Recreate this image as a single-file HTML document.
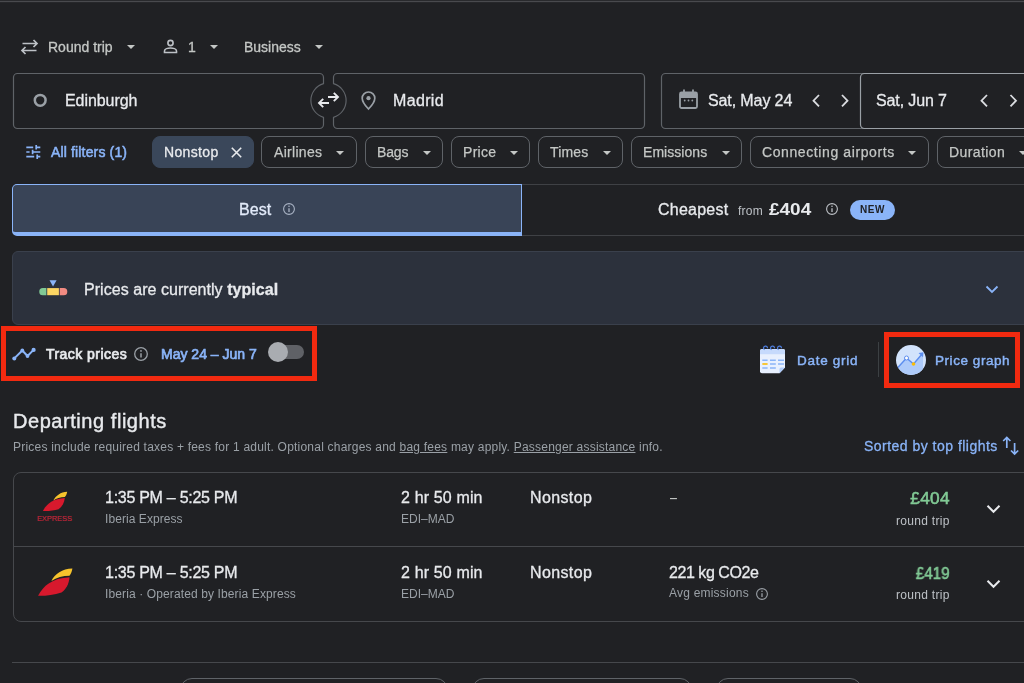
<!DOCTYPE html>
<html lang="en">
<head>
<meta charset="utf-8">
<title>Flights</title>
<style>
*{box-sizing:border-box;margin:0;padding:0}
html,body{width:1024px;height:683px;overflow:hidden;background:#202124}
body{position:relative;font-family:"Liberation Sans",Arial,sans-serif;color:#e8eaed;-webkit-font-smoothing:antialiased}
.abs{position:absolute}
.t{position:absolute;white-space:nowrap;line-height:1;transform-origin:0 50%;will-change:transform}
.topline{left:0;top:0;width:1024px;height:3px;background:linear-gradient(#292a2d 0,#292a2d 33.300%,#494a4e 33.300%,#494a4e 66.600%,#26272a 66.600%)}
.box{position:absolute;border:1px solid #5f6368;border-radius:4px}
.pill{position:absolute;top:136.400px;height:31.600px;border:1px solid #5f6368;border-radius:8px}
.pt{font-size:14px;color:#c4c7c5;-webkit-text-stroke:0.25px}
.m{-webkit-text-stroke:0.3px}
.caret{position:absolute;width:0;height:0;border-left:4px solid transparent;border-right:4px solid transparent;border-top:4.5px solid #c4c7c5}
.g{color:#9aa0a6}
.blue{color:#8ab4f8}
svg{position:absolute;overflow:visible}
</style>
</head>
<body>
<div class="abs topline"></div>

<!-- row 1: trip options -->
<svg style="left:20px;top:39px" width="19" height="16" viewBox="0 0 19 16"><path d="M13.5 1 L17 4.5 L13.5 8 M17 4.5 H2.5 M5.5 8 L2 11.5 L5.5 15 M2 11.5 H16.5" fill="none" stroke="#bdc1c6" stroke-width="1.7"/></svg>
<div class="t g m" id="roundtrip" style="left:48px;top:40px;font-size:14px;color:#c4c7c5">Round trip</div>
<div class="caret" style="left:127px;top:45px"></div>
<svg style="left:163px;top:39px" width="15" height="15" viewBox="0 0 15 15"><circle cx="7.5" cy="4" r="2.6" fill="none" stroke="#bdc1c6" stroke-width="1.6"/><path d="M1.5 13.5 V12 C1.500 10 5 9 7.5 9 C10 9 13.5 10 13.5 12 V13.500 Z" fill="none" stroke="#bdc1c6" stroke-width="1.6"/></svg>
<div class="t m" id="one" style="left:188px;top:40px;font-size:14px;color:#c4c7c5">1</div>
<div class="caret" style="left:210px;top:45px"></div>
<div class="t m" id="business" style="left:244px;top:40px;font-size:14px;color:#c4c7c5">Business</div>
<div class="caret" style="left:315px;top:45px"></div>

<!-- row 2: search boxes -->
<svg style="left:0;top:0" width="1024" height="140" viewBox="0 0 1024 140" fill="none" stroke="#5f6368" stroke-width="1.2" stroke-linejoin="round">
<path d="M17.500 73.500 H319.500 A4 4 0 0 1 323.500 77.500 V83.700 A17.500 17.500 0 0 0 323.500 117.300 V124.500 A4 4 0 0 1 319.500 128.500 H17.500 A4 4 0 0 1 13.500 124.500 V77.500 A4 4 0 0 1 17.500 73.500 Z"/>
<path d="M337.500 73.500 H640.500 A4 4 0 0 1 644.500 77.500 V124.500 A4 4 0 0 1 640.500 128.500 H337.500 A4 4 0 0 1 333.500 124.500 V117.300 A17.500 17.500 0 0 0 333.500 83.700 V77.500 A4 4 0 0 1 337.500 73.500 Z"/>
<path d="M1030 73.500 H665.500 A4 4 0 0 0 661.500 77.500 V124.500 A4 4 0 0 0 665.500 128.500 H1030"/>
<path d="M1030 73.500 H864.500 A4 4 0 0 0 860.500 77.500 V124.500 A4 4 0 0 0 864.500 128.500 H1030" stroke="#9aa0a6"/>
</svg>
<svg style="left:33px;top:93px" width="14" height="14" viewBox="0 0 14 14"><circle cx="7.200" cy="7.300" r="5.400" fill="none" stroke="#9aa0a6" stroke-width="2.500"/></svg>
<div class="t m" id="edi" style="left:65px;top:93px;font-size:16px;letter-spacing:-0.069px">Edinburgh</div>
<svg style="left:318px;top:91px" width="21" height="18" viewBox="0 0 21 18"><path d="M10 6 H20 M15.800 1.800 L20 6 L15.800 10.200 M11 12 H1 M5.200 7.800 L1 12 L5.200 16.200" fill="none" stroke="#e8eaed" stroke-width="1.900"/></svg>
<svg style="left:361px;top:91px" width="15" height="19" viewBox="0 0 15 19"><path d="M7.500 1 C3.900 1 1.200 3.700 1.200 7.200 C1.200 11.500 7.500 18 7.500 18 C7.500 18 13.800 11.500 13.800 7.200 C13.800 3.700 11.100 1 7.500 1 Z" fill="none" stroke="#9aa0a6" stroke-width="1.700"/><circle cx="7.500" cy="7.200" r="2.100" fill="#9aa0a6"/></svg>
<div class="t m" id="mad" style="left:393px;top:93px;font-size:16px;letter-spacing:0.339px">Madrid</div>
<div class="t m" id="d1" style="left:708px;top:93px;font-size:16px;letter-spacing:-0.108px">Sat, May 24</div>
<div class="t m" id="d2" style="left:876px;top:93px;font-size:16px;letter-spacing:-0.116px">Sat, Jun 7</div>

<!-- date icons -->
<svg style="left:679px;top:89px" width="19" height="20" viewBox="0 0 19 20"><path d="M2.500 3.500 H16.500 A1.500 1.500 0 0 1 18 5 V17.500 A1.500 1.500 0 0 1 16.500 19 H2.500 A1.500 1.500 0 0 1 1 17.500 V5 A1.500 1.500 0 0 1 2.500 3.500 Z M1 8 H18" fill="none" stroke="#9aa0a6" stroke-width="1.800"/><rect x="1" y="3.500" width="17" height="4.500" fill="#9aa0a6"/><path d="M5 0.500 V4 M14 0.500 V4" stroke="#9aa0a6" stroke-width="1.800"/><circle cx="5.700" cy="11.500" r="0.900" fill="#9aa0a6"/><circle cx="9.500" cy="11.500" r="0.900" fill="#9aa0a6"/><circle cx="13.300" cy="11.500" r="0.900" fill="#9aa0a6"/></svg>
<svg style="left:0;top:0" width="1024" height="140" viewBox="0 0 1024 140" fill="none" stroke="#dadce0" stroke-width="1.800">
<path d="M819 95 L813.500 100.700 L819 106.400"/><path d="M842 95 L847.500 100.700 L842 106.400"/>
<path d="M987 95 L981.500 100.700 L987 106.400"/><path d="M1010.500 95 L1016 100.700 L1010.500 106.400"/>
</svg>

<!-- row 3: filters -->
<svg style="left:26px;top:145px" width="15" height="14" viewBox="0 0 15 14" fill="none" stroke="#8ab4f8" stroke-width="1.700"><path d="M0.300 2.300 H7.200 M10.200 2.300 H14.300 M0.300 7 H3.600 M6.600 7 H14.300 M0.300 11.700 H8.200 M11.200 11.700 H14.300 M10.200 0 V4.600 M6.600 4.700 V9.300 M11.200 9.400 V14"/></svg>
<div class="t blue" id="allf" style="left:51px;top:145px;font-size:14px;letter-spacing:0.15px;-webkit-text-stroke:0.55px #8ab4f8">All filters (1)</div>
<div class="pill" style="left:151.600px;width:102px;background:#3a475a;border-color:#3a475a"></div>
<div class="t m" id="nonstop" style="letter-spacing:0.34px;left:164px;top:145px;font-size:14px">Nonstop</div>
<svg style="left:231px;top:147px" width="11" height="11" viewBox="0 0 11 11"><path d="M0.800 0.800 L10.200 10.200 M10.200 0.800 L0.800 10.200" stroke="#e8eaed" stroke-width="1.600"/></svg>

<div class="pill" style="left:261px;width:96px"></div>
<div class="t pt" id="f1" style="letter-spacing:0.3px;left:273.500px;top:145px">Airlines</div><div class="caret" style="left:335.500px;top:151px"></div>
<div class="pill" style="left:365px;width:78px"></div>
<div class="t pt" id="f2" style="letter-spacing:-0.15px;left:377px;top:145px">Bags</div><div class="caret" style="left:422.500px;top:151px"></div>
<div class="pill" style="left:451px;width:79px"></div>
<div class="t pt" id="f3" style="letter-spacing:0.3px;left:462.500px;top:145px">Price</div><div class="caret" style="left:509.500px;top:151px"></div>
<div class="pill" style="left:538px;width:85px"></div>
<div class="t pt" id="f4" style="letter-spacing:0.14px;left:550px;top:145px">Times</div><div class="caret" style="left:602.500px;top:151px"></div>
<div class="pill" style="left:631px;width:111px"></div>
<div class="t pt" id="f5" style="letter-spacing:0.05px;left:643px;top:145px">Emissions</div><div class="caret" style="left:721.500px;top:151px"></div>
<div class="pill" style="left:750px;width:179px"></div>
<div class="t pt" id="f6" style="letter-spacing:0.6px;left:762px;top:145px">Connecting airports</div><div class="caret" style="left:908px;top:151px"></div>
<div class="pill" style="left:937px;width:120px"></div>
<div class="t pt" id="f7" style="letter-spacing:0.42px;left:949px;top:145px">Duration</div><div class="caret" style="left:1019px;top:151px"></div>

<!-- tabs -->
<div class="abs" style="left:522px;top:184px;width:520px;height:52px;border-top:1px solid #3f4145;border-bottom:1px solid #3f4145"></div>
<div class="abs" style="left:12px;top:184px;width:510px;height:52px;background:#394457;border:1px solid #8ab4f8;border-bottom-width:4px;border-radius:5px 0 0 5px"></div>
<div class="t m" id="best" style="left:239px;top:202px;color:#e3ebfa;font-size:16px;letter-spacing:0.095px">Best</div>
<svg style="left:282px;top:202px" width="14" height="14" viewBox="0 0 14 14"><circle cx="7" cy="7" r="5.400" fill="none" stroke="#a9b3c4" stroke-width="1.100"/><path d="M7 6.300 V10" stroke="#a9b3c4" stroke-width="1.300"/><circle cx="7" cy="4.300" r="0.800" fill="#a9b3c4"/></svg>
<div class="t m" id="cheap" style="left:657.500px;top:202px;font-size:16px;letter-spacing:0.229px">Cheapest</div>
<div class="t" id="from" style="letter-spacing:0.25px;left:738px;top:205px;font-size:12px;color:#bdc1c6">from</div>
<div class="t" id="p404" style="transform:scaleX(1.185);left:769px;top:202px;font-size:16px;font-weight:bold">£404</div>
<svg style="left:825px;top:202px" width="14" height="14" viewBox="0 0 14 14"><circle cx="7" cy="7" r="5.400" fill="none" stroke="#bdc1c6" stroke-width="1.100"/><path d="M7 6.300 V10" stroke="#bdc1c6" stroke-width="1.300"/><circle cx="7" cy="4.300" r="0.800" fill="#bdc1c6"/></svg>
<div class="abs" style="left:850px;top:200px;width:45px;height:20px;border-radius:10px;background:#8ab4f8"></div>
<div class="t" id="new" style="left:859.500px;top:205px;font-size:10px;font-weight:bold;color:#202124;letter-spacing:0.5px">NEW</div>

<!-- price insight card -->
<div class="abs" style="left:12px;top:251px;width:1030px;height:74px;background:#2c313c;border:1px solid #3a404c;border-radius:6px"></div>
<svg style="left:39px;top:280px" width="29" height="16" viewBox="0 0 29 16"><path d="M10.500 0.300 H17.600 L14.050 6.600 Z" fill="#8ab4f8"/><path d="M3.800 8.100 H7.400 V15.200 H3.800 A3.550 3.550 0 0 1 3.800 8.100 Z" fill="#81c995"/><rect x="8.200" y="8.100" width="11.700" height="7.100" fill="#fdd663"/><path d="M20.700 8.100 H24.750 A3.550 3.550 0 0 1 24.750 15.200 H20.700 Z" fill="#f28b82"/></svg>
<div class="t m" id="prices" style="left:83.700px;top:282px;font-size:16px;letter-spacing:0.042px">Prices are currently <b>typical</b></div>
<svg style="left:985px;top:285px" width="14" height="9" viewBox="0 0 14 9"><path d="M1.500 1.500 L7 7 L12.500 1.500" fill="none" stroke="#8ab4f8" stroke-width="1.800"/></svg>

<!-- track prices row -->
<svg style="left:12px;top:346px" width="24" height="16" viewBox="0 0 24 16"><path d="M2.300 12.400 L10.300 4.500 L15.500 10 L21.600 3.900" fill="none" stroke="#8ab4f8" stroke-width="2" stroke-linejoin="round"/><circle cx="2.300" cy="12.400" r="2" fill="#8ab4f8"/><circle cx="10.300" cy="4.500" r="1.900" fill="#8ab4f8"/><circle cx="15.500" cy="10" r="1.900" fill="#8ab4f8"/><circle cx="21.600" cy="3.900" r="2.100" fill="#8ab4f8"/></svg>
<div class="t" id="track" style="left:45.700px;top:347px;-webkit-text-stroke:0.7px;font-size:14px;letter-spacing:0.453px">Track prices</div>
<svg style="left:132.500px;top:346px" width="16" height="16" viewBox="0 0 16 16"><circle cx="8" cy="8" r="6.300" fill="none" stroke="#9aa0a6" stroke-width="1.300"/><path d="M8 7.200 V11.400" stroke="#9aa0a6" stroke-width="1.500"/><circle cx="8" cy="4.900" r="0.900" fill="#9aa0a6"/></svg>
<div class="t blue" id="range" style="left:160.700px;top:347px;-webkit-text-stroke:0.7px;font-size:14px;letter-spacing:0.005px">May 24 – Jun 7</div>
<div class="abs" style="left:272px;top:345px;width:32.300px;height:14.200px;border-radius:7.100px;background:#5f6166"></div>
<div class="abs" style="left:267.700px;top:342.200px;width:20px;height:20px;border-radius:50%;background:#a9acb1"></div>
<div class="abs" id="red1" style="left:0.700px;top:325.500px;width:316.800px;height:55.500px;border:5.500px solid #f22a10"></div>

<!-- date grid / price graph -->
<svg style="left:759px;top:346px" width="28" height="28" viewBox="0 0 28 28">
<path d="M3 3 H24 A2 2 0 0 1 26 5 V21.500 L20.500 27.200 H3 A2 2 0 0 1 1 25.200 V5 A2 2 0 0 1 3 3 Z" fill="#e8f0fe"/>
<path d="M3 3 H24 A2 2 0 0 1 26 5 V8.300 H1 V5 A2 2 0 0 1 3 3 Z" fill="#c6dafc"/>
<path d="M20.500 27.200 V23 A1.500 1.500 0 0 1 22 21.500 H26 Z" fill="#aecbfa"/>
<g stroke="#4f7fe0" stroke-width="1.200" fill="none"><path d="M5.500 3.800 A2 2 0 1 1 8.500 2.300"/><path d="M12.500 3.800 A2 2 0 1 1 15.500 2.300"/><path d="M19.500 3.800 A2 2 0 1 1 22.500 2.300"/></g>
<g stroke="#8ab4f8" stroke-width="1.600"><path d="M3.300 14.200 H8.600 M11 14.200 H16.800 M19 14.200 H25"/><path d="M11 18 H16.800 M19 18 H25"/><path d="M3.300 22 H8.600 M11 22 H16.800"/></g>
<path d="M3.300 18 H8.600" stroke="#fbbc04" stroke-width="1.600"/>
</svg>
<div class="t blue" id="dgrid" style="left:797px;top:353.500px;-webkit-text-stroke:0.45px;font-size:13.5px;letter-spacing:0.715px">Date grid</div>
<div class="abs" style="left:878px;top:342px;width:1px;height:35px;background:#3c4043"></div>
<svg style="left:895.500px;top:345px" width="30" height="30" viewBox="0 0 30 30">
<defs><clipPath id="pgc"><circle cx="15" cy="15" r="15"/></clipPath></defs>
<circle cx="15" cy="15" r="15" fill="#d2e3fc"/>
<g clip-path="url(#pgc)"><path d="M0 24 L10.500 13 L17.500 19 L27 8 V30 H0 Z" fill="#aecbfa"/>
<path d="M1 23.500 L10.500 13 L17.500 19 L26.500 8.500" fill="none" stroke="#5b8def" stroke-width="1.400"/>
<path d="M22.500 8 L27.500 7.200 L27 12.300 Z" fill="#5b8def"/>
<circle cx="10.500" cy="13" r="2" fill="#fff" stroke="#5b8def" stroke-width="1"/>
<circle cx="17.500" cy="19" r="1.800" fill="#fbbc04"/></g>
</svg>
<div class="t blue" id="pgraph" style="left:934.700px;top:353.500px;-webkit-text-stroke:0.45px;font-size:13.5px;letter-spacing:0.555px">Price graph</div>
<div class="abs" id="red2" style="left:884px;top:332px;width:136px;height:55.700px;border:5.500px solid #f22a10"></div>

<!-- departing flights heading -->
<div class="t" id="dep" style="letter-spacing:0.55px;-webkit-text-stroke:0.4px #e8eaed;left:13px;top:411px;font-size:20px">Departing flights</div>
<div class="t g" id="sub" style="letter-spacing:0.216px;left:13px;top:441px;font-size:12px">Prices include required taxes + fees for 1 adult. Optional charges and <u id="bag">bag fees</u> may apply. <u id="pass">Passenger assistance</u> info.</div>
<div class="t blue" id="sorted" style="letter-spacing:0.48px;-webkit-text-stroke:0.3px #8ab4f8;left:863.500px;top:439px;font-size:14px">Sorted by top flights</div>
<svg style="left:1002px;top:436px" width="18" height="20" viewBox="0 0 18 20" fill="none" stroke="#8ab4f8" stroke-width="1.700"><path d="M4.800 12 V1.500 M1.200 5 L4.800 1.500 L8.400 5"/><path d="M12.600 7 V18 M9 14.500 L12.600 18 L16.200 14.500"/></svg>

<!-- flights list -->
<div class="abs" style="left:12.500px;top:471.500px;width:1030px;height:150px;border:1px solid #46484c;border-radius:8px"></div>
<div class="abs" style="left:13px;top:546px;width:1011px;height:1px;background:#46484c"></div>

<!-- row 1 -->
<svg style="left:36px;top:490px" width="38" height="34" viewBox="0 0 38 34">
<path d="M17.300 10.600 C20 5.500 24.500 2.200 31.200 1.800 C30.900 4 30 5.700 28.800 7 C24.500 7 20.500 8.300 17.300 10.600 Z" fill="#f6c32c"/>
<path d="M6.900 21 C10.500 14 17 8.800 28.800 8.100 C28.300 12.500 26.500 16.500 22.500 19.300 C18 20.800 12 21.200 6.900 21 Z" fill="#d7192d"/>
<text x="18.400" y="30.800" font-family="Liberation Sans, Arial, sans-serif" font-size="7.600" fill="#c4263b" stroke="#c4263b" stroke-width="0.150" text-anchor="middle" textLength="35" lengthAdjust="spacingAndGlyphs">EXPRESS</text>
</svg>
<div class="t m" id="t1" style="left:105px;top:490px;font-size:16px;letter-spacing:-0.273px">1:35 PM – 5:25 PM</div>
<div class="t g" id="a1" style="letter-spacing:0.07px;left:105px;top:513px;font-size:12px">Iberia Express</div>
<div class="t m" id="du1" style="left:400.500px;top:490px;font-size:16px;letter-spacing:0.145px">2 hr 50 min</div>
<div class="t g" id="r1" style="left:400.500px;top:513px;font-size:12px">EDI–MAD</div>
<div class="t m" id="n1" style="left:530px;top:490px;font-size:16px;letter-spacing:0.368px">Nonstop</div>
<div class="t g" id="dash" style="left:670px;top:490px;font-size:16px;color:#c4c7c5;transform:scaleX(0.8)">–</div>
<div class="t" id="pr1" style="right:74.500px;top:491px;-webkit-text-stroke:0.55px;color:#81c995;transform-origin:100% 50%;font-size:16px;letter-spacing:0.3px;transform:scaleX(1.075)">£404</div>
<div class="t" id="rt1" style="letter-spacing:0.3px;right:74.500px;top:514.500px;font-size:12px;color:#bdc1c6;transform-origin:100% 50%">round trip</div>
<svg style="left:986px;top:504px" width="15" height="10" viewBox="0 0 15 10"><path d="M1.500 1.800 L7.500 7.800 L13.500 1.800" fill="none" stroke="#e8eaed" stroke-width="2"/></svg>

<!-- row 2 -->
<svg style="left:36px;top:567px" width="38" height="30" viewBox="0 0 38 30">
<path d="M15.400 14 C19 7 26 1.800 36.400 1.600 C36 4.500 35 7 33.500 8.800 C27 8.800 20.500 10.500 15.400 14 Z" fill="#f6c32c"/>
<path d="M2.100 28.800 C7 19 16 11 33.500 10.200 C33 17 30 22 25.500 25.500 C18 28 9 29 2.100 28.800 Z" fill="#d7192d"/>
</svg>
<div class="t m" id="t2" style="left:105px;top:565px;font-size:16px;letter-spacing:-0.273px">1:35 PM – 5:25 PM</div>
<div class="t g" id="a2" style="letter-spacing:0.12px;left:105px;top:588px;font-size:12px">Iberia · Operated by Iberia Express</div>
<div class="t m" id="du2" style="left:400.500px;top:565px;font-size:16px;letter-spacing:0.145px">2 hr 50 min</div>
<div class="t g" id="r2" style="left:400.500px;top:588px;font-size:12px">EDI–MAD</div>
<div class="t m" id="n2" style="left:530px;top:565px;font-size:16px;letter-spacing:0.368px">Nonstop</div>
<div class="t m" id="co2" style="left:669px;top:565px;font-size:16px;letter-spacing:-0.448px">221 kg CO2e</div>
<div class="t g" id="avg" style="letter-spacing:0.21px;left:669px;top:587px;font-size:12px">Avg emissions</div>
<svg style="left:754.500px;top:586.500px" width="14" height="14" viewBox="0 0 14 14"><circle cx="7" cy="7" r="5.400" fill="none" stroke="#9aa0a6" stroke-width="1.100"/><path d="M7 6.300 V10" stroke="#9aa0a6" stroke-width="1.300"/><circle cx="7" cy="4.300" r="0.800" fill="#9aa0a6"/></svg>
<div class="t" id="pr2" style="right:74.500px;top:566px;-webkit-text-stroke:0.55px;color:#81c995;transform-origin:100% 50%;font-size:16px;letter-spacing:0px;transform:scaleX(0.95)">£419</div>
<div class="t" id="rt2" style="letter-spacing:0.3px;right:74.500px;top:589px;font-size:12px;color:#bdc1c6;transform-origin:100% 50%">round trip</div>
<svg style="left:986px;top:579px" width="15" height="10" viewBox="0 0 15 10"><path d="M1.500 1.800 L7.500 7.800 L13.500 1.800" fill="none" stroke="#e8eaed" stroke-width="2"/></svg>

<!-- bottom -->
<div class="abs" style="left:12px;top:662px;width:1012px;height:1px;background:#46484c"></div>
<div class="abs" style="left:180px;top:678px;width:268px;height:40px;border:1px solid #5f6368;border-radius:12px"></div>
<div class="abs" style="left:472px;top:678px;width:220px;height:40px;border:1px solid #5f6368;border-radius:12px"></div>
<div class="abs" style="left:716px;top:678px;width:146px;height:40px;border:1px solid #5f6368;border-radius:12px"></div>

</body>
</html>
